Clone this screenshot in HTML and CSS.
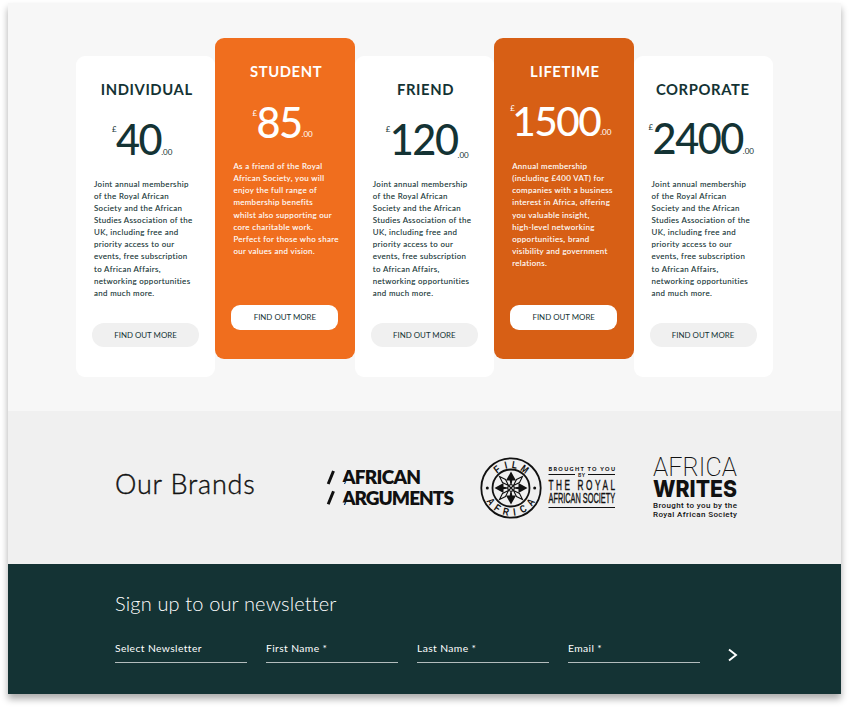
FILE: index.html
```html
<!DOCTYPE html>
<html lang="en">
<head>
<meta charset="utf-8">
<title>Royal African Society – Membership</title>
<link rel="stylesheet" href="styles.css">
</head>
<body>
<main class="page">
  <section class="plans">
    <article class="card individual">
      <h2 class="name">INDIVIDUAL</h2>
      <p class="price"><span class="cur">£</span><span class="num">40</span><span class="dec">.00</span></p>
      <p class="text">Joint annual membership<br>of the Royal African<br>Society and the African<br>Studies Association of the<br>UK, including free and<br>priority access to our<br>events, free subscription<br>to African Affairs,<br>networking opportunities<br>and much more.</p>
      <a class="btn">FIND OUT MORE</a>
    </article>
    <article class="card raised student">
      <h2 class="name">STUDENT</h2>
      <p class="price"><span class="cur">£</span><span class="num">85</span><span class="dec">.00</span></p>
      <p class="text">As a friend of the Royal<br>African Society, you will<br>enjoy the full range of<br>membership benefits<br>whilst also supporting our<br>core charitable work.<br>Perfect for those who share<br>our values and vision.</p>
      <a class="btn">FIND OUT MORE</a>
    </article>
    <article class="card friend">
      <h2 class="name">FRIEND</h2>
      <p class="price"><span class="cur">£</span><span class="num">120</span><span class="dec">.00</span></p>
      <p class="text">Joint annual membership<br>of the Royal African<br>Society and the African<br>Studies Association of the<br>UK, including free and<br>priority access to our<br>events, free subscription<br>to African Affairs,<br>networking opportunities<br>and much more.</p>
      <a class="btn">FIND OUT MORE</a>
    </article>
    <article class="card raised lifetime">
      <h2 class="name">LIFETIME</h2>
      <p class="price"><span class="cur">£</span><span class="num">1500</span><span class="dec">.00</span></p>
      <p class="text">Annual membership<br>(including £400 VAT) for<br>companies with a business<br>interest in Africa, offering<br>you valuable insight,<br>high-level networking<br>opportunities, brand<br>visibility and government<br>relations.</p>
      <a class="btn">FIND OUT MORE</a>
    </article>
    <article class="card corporate">
      <h2 class="name">CORPORATE</h2>
      <p class="price"><span class="cur">£</span><span class="num">2400</span><span class="dec">.00</span></p>
      <p class="text">Joint annual membership<br>of the Royal African<br>Society and the African<br>Studies Association of the<br>UK, including free and<br>priority access to our<br>events, free subscription<br>to African Affairs,<br>networking opportunities<br>and much more.</p>
      <a class="btn">FIND OUT MORE</a>
    </article>
  </section>

  <section class="brands">
    <h2 class="brands-title">Our Brands</h2>
    <svg class="logo logo-arguments" width="130" height="40" viewBox="0 0 130 40">
      <path class="stroke-slash" d="M2.2 16L7.5 3M2.2 36.3L7.5 23.3"/>
      <g class="arguments-type">
        <text x="16" y="16.3" textLength="79">AFRICAN</text>
        <text x="16" y="36.7" textLength="112">ARGUMENTS</text>
      </g>
      <path class="notch" d="M14 0H21.500L17 11H15V14H19L17 18H14zM14 20.500H21.500L17 31.400H15V34.400H19L17 38.500H14z"/>
    </svg>
    <svg class="logo logo-film" width="138" height="64" viewBox="0 0 138 64">
      <circle class="ring" cx="32" cy="32" r="29.7"/>
      <circle class="ring" cx="32" cy="32" r="18.500"/>
      <circle cx="8.300" cy="32" r="1.500"/><circle cx="55.700" cy="32" r="1.500"/>
      <g class="film-type">
        <text transform="translate(32 32) rotate(-37) scale(.8 1)" y="-19.800">F</text>
        <text transform="translate(32 32) rotate(-13) scale(.8 1)" y="-19.800">I</text>
        <text transform="translate(32 32) rotate(9) scale(.8 1)" y="-19.800">L</text>
        <text transform="translate(32 32) rotate(36) scale(.8 1)" y="-19.800">M</text>
        <text transform="translate(32 32) rotate(56) scale(.8 1)" y="27.800">A</text>
        <text transform="translate(32 32) rotate(34) scale(.8 1)" y="27.800">F</text>
        <text transform="translate(32 32) rotate(12) scale(.8 1)" y="27.800">R</text>
        <text transform="translate(32 32) rotate(-8) scale(.8 1)" y="27.800">I</text>
        <text transform="translate(32 32) rotate(-30) scale(.8 1)" y="27.800">C</text>
        <text transform="translate(32 32) rotate(-54) scale(.8 1)" y="27.800">A</text>
      </g>
      <defs>
        <g id="petal">
          <path d="M32 15.500L37 24.500H33.300L32.500 29H31.500L30.700 24.500H27z"/>
          <path class="thin" d="M34.500 29.500L37.500 23.500L43.500 20.500L40.500 26.500z"/>
        </g>
      </defs>
      <use href="#petal"/>
      <use href="#petal" transform="rotate(90 32 32)"/>
      <use href="#petal" transform="rotate(180 32 32)"/>
      <use href="#petal" transform="rotate(270 32 32)"/>
      <circle class="thin" cx="32" cy="32" r="3.200"/>
      <path class="thin" d="M29.500 29.500L34.500 34.500M34.500 29.500L29.500 34.500"/>
      <path class="rule" d="M69.500 18.500H96M109 18.500H136M69.500 51.500H136"/>
      <text class="tiny" x="69.500" y="14.800" textLength="66.500">BROUGHT TO YOU</text>
      <text class="by" x="99" y="20.500" textLength="7">BY</text>
      <g class="royal-type">
        <text transform="translate(69.500 33.800) scale(.55 1)" textLength="121">THE ROYAL</text>
        <text transform="translate(69.500 47.300) scale(.55 1)" textLength="121" lengthAdjust="spacingAndGlyphs">AFRICAN SOCIETY</text>
      </g>
    </svg>
    <svg class="logo logo-writes" width="90" height="66" viewBox="0 0 90 66">
      <text class="w-africa" x="2" y="20" textLength="84">AFRICA</text>
      <text class="w-writes" x="2" y="40.500" textLength="84" lengthAdjust="spacingAndGlyphs">WRITES</text>
      <text class="w-small" x="2" y="51.500" textLength="84">Brought to you by the</text>
      <text class="w-small" x="2" y="61" textLength="84">Royal African Society</text>
    </svg>
  </section>

  <section class="newsletter">
    <h2 class="news-title">Sign up to our newsletter</h2>
    <form class="fields">
      <label class="field">Select Newsletter</label>
      <label class="field">First Name *</label>
      <label class="field">Last Name *</label>
      <label class="field">Email *</label>
      <svg class="arrow" width="12" height="16" viewBox="0 0 12 16"><path d="M2 2.500L9 8L2 13.500"/></svg>
    </form>
  </section>
</main>
</body>
</html>
```
FILE: styles.css
```css
* { box-sizing: border-box; margin: 0; padding: 0; }
body { height: 709px; padding: 3px 0 0 8px; background: #fff; font-family: Lato, "Liberation Sans", sans-serif; font-variant-ligatures: none; color: #143334; }
.page { width: 832.500px; height: 691px; background: #f7f7f7; box-shadow: 0 5px 7px rgba(0,0,0,.33); }

.plans { display: flex; align-items: flex-start; height: 408px; padding: 52.500px 67px 0 68px; }
.card { display: flex; flex-direction: column; flex: none; width: 139.400px; height: 321px; background: #fff; border-radius: 9px; padding: 22px 0 0 16px; }
.raised { margin-top: -17.500px; color: #fff; }
.student { background: #f06e1e; }
.lifetime { background: #d75f15; }
.name { width: 125.400px; margin-left: -8px; height: 22px; line-height: 22px; font-size: 14.800px; font-weight: 700; letter-spacing: .6px; text-align: center; white-space: nowrap; }
.corporate .name { margin-left: -9.500px; }
.price { display: flex; height: 55px; margin: 12px 0 0; white-space: nowrap; }
.num { font-size: 41.500px; line-height: 55px; font-weight: 500; letter-spacing: -1.500px; }
.cur { width: 4px; font-size: 8px; line-height: 10px; padding-top: 12px; }
.dec { font-size: 8px; line-height: 10px; padding-top: 35px; }
.individual .price { padding-left: 20px; }
.student .price { padding-left: 21px; margin: 13px 0 -1px; }
.student .dec { padding-top: 34px; }
.friend .price { padding-left: 15px; }
.friend .dec { padding-top: 38px; }
.raised .cur { padding-top: 13px; }
.lifetime .price, .corporate .price { margin: 11px 0 1px -1px; }
.lifetime .price { margin-left: 0; }
.lifetime .cur { width: 2px; padding-top: 10px; }
.corporate .cur { padding-top: 11px; }
.lifetime .num { font-size: 40.500px; letter-spacing: -1.500px; }
.lifetime .dec { padding-top: 34px; }
.text { margin: 11px 0 0 2px; height: 122px; font-size: 7.900px; line-height: 12.150px; letter-spacing: .36px; white-space: nowrap; -webkit-text-stroke: .1px currentColor; }
.btn { width: 107px; height: 24.500px; margin-top: 23px; border-radius: 12px; background: #f0f0f0; color: #143334; font-size: 7.900px; line-height: 24.500px; text-align: center; }
.raised .btn { background: #fff; border-radius: 9px; }

.brands { display: flex; height: 153px; padding: 0 0 0 107px; background: #f0f0f0; }
.brands-title { flex: none; width: 211px; padding-top: 55px; font-size: 27px; line-height: 36px; font-weight: 300; letter-spacing: .8px; -webkit-text-stroke: .4px currentColor; color: #111; white-space: nowrap; }
.logo { flex: none; overflow: visible; fill: #111; }
.logo-arguments { margin-top: 57px; }
.stroke-slash { stroke: #111; stroke-width: 3; }
.arguments-type { font-weight: 800; font-size: 19px; }
.notch { fill: #f0f0f0; }
.logo-film { margin: 45px 0 0 23px; }
.ring { fill: none; stroke: #111; stroke-width: 1.800; }
.film-type { font: 700 10.500px "Liberation Sans", sans-serif; text-anchor: middle; }
.thin { fill: none; stroke: #111; stroke-width: 1.100; }
.rule { stroke: #111; stroke-width: 1; }
.tiny { font-size: 5.500px; font-weight: 900; }
.by { font-size: 5px; font-weight: 700; }
.royal-type { font: 400 15px "Liberation Sans", sans-serif; stroke: #111; stroke-width: .4; }
.logo-writes { margin: 45px 0 0 34px; }
.w-africa { font: 200 25px Roboto, sans-serif; }
.w-writes { font: 800 23.500px Inter, sans-serif; }
.w-small { font: 500 8px Roboto, sans-serif; }

.newsletter { height: 130px; padding: 26px 0 0 107px; background: #143334; color: #fff; }
.news-title { font-size: 20px; line-height: 26px; font-weight: 300; letter-spacing: .15px; }
.fields { display: flex; gap: 19px; margin-top: 20px; }
.field { width: 132px; height: 27px; border-bottom: 1px solid #b3bdbd; font-size: 10.300px; line-height: 24px; letter-spacing: .4px; }
.arrow { margin: 11px 0 0 8px; fill: none; stroke: #fff; stroke-width: 1.900; }
```
